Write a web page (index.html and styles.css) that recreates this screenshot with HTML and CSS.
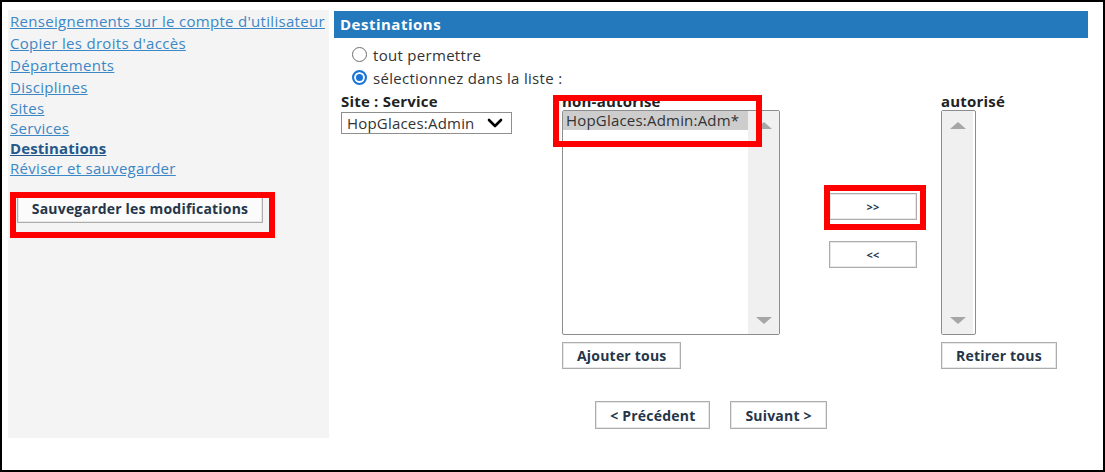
FILE: index.html
```html
<!DOCTYPE html>
<html lang="fr">
<head>
  <meta charset="UTF-8" />
  <meta name="viewport" content="width=device-width, initial-scale=1" />
  <title>Destinations</title>
  <link rel="stylesheet" href="styles.css">
</head>
<body>
  <div class="cadre">

    <div class="menu">
      <a class="lien" href="#">Renseignements sur le compte d'utilisateur</a>
      <a class="lien" href="#">Copier les droits d'accès</a>
      <a class="lien" href="#">Départements</a>
      <a class="lien" href="#">Disciplines</a>
      <a class="lien court" href="#">Sites</a>
      <a class="lien court" href="#">Services</a>
      <a class="lien court actif" href="#">Destinations</a>
      <a class="lien court" href="#">Réviser et sauvegarder</a>
      <button class="bouton sauver">Sauvegarder les modifications</button>
    </div>

    <div class="principal">
      <div class="entete">Destinations</div>

      <div class="choix">
        <label class="option-radio"><span class="radio"></span>tout permettre</label>
        <label class="option-radio"><span class="radio coche"></span>sélectionnez dans la liste :</label>
      </div>

      <div class="colonnes">
        <div class="col col-site">
          <div class="etiquette">Site : Service</div>
          <div class="liste-deroulante">
            <span>HopGlaces:Admin</span>
            <svg width="16" height="10" viewBox="0 0 16 10"><path d="M2 2 L8 8 L14 2" fill="none" stroke="#000" stroke-width="2.6" stroke-linecap="round" stroke-linejoin="round"/></svg>
          </div>
        </div>

        <div class="col col-non">
          <div class="etiquette">non-autorisé</div>
          <div class="boite-liste large">
            <div class="elements">
              <div class="element choisi">HopGlaces:Admin:Adm*</div>
            </div>
            <div class="defilement"><span class="fleche haut"></span><span class="fleche bas"></span></div>
          </div>
          <button class="bouton tous">Ajouter tous</button>
        </div>

        <div class="col col-fleches">
          <button class="bouton petit">&gt;&gt;</button>
          <button class="bouton petit">&lt;&lt;</button>
        </div>

        <div class="col col-oui">
          <div class="etiquette">autorisé</div>
          <div class="boite-liste etroite">
            <div class="defilement"><span class="fleche haut"></span><span class="fleche bas"></span></div>
          </div>
          <button class="bouton tous">Retirer tous</button>
        </div>
      </div>

      <div class="navigation">
        <button class="bouton nav">&lt; Précédent</button>
        <button class="bouton nav">Suivant &gt;</button>
      </div>
    </div>

    <!-- encadres rouges -->
    <div class="marque m-sauver"></div>
    <div class="marque m-liste"></div>
    <div class="marque m-fleche"></div>
  </div>
</body>
</html>
```
FILE: styles.css
```css
body {
  margin: 0;
  font-family: "Open Sans", "Liberation Sans", sans-serif;
  color: #333;
}

.cadre {
  position: relative;
  box-sizing: border-box;
  width: 1105px;
  height: 472px;
  border: 2px solid #000;
  padding: 8px 0 0 6px;
  display: flex;
  gap: 5px;
  background: #fff;
}

.menu {
  width: 321px;
  height: 428px;
  padding-left: 2px;
  box-sizing: border-box;
  background: #f4f4f4;
  display: flex;
  flex-direction: column;
  align-items: flex-start;
}
.lien {
  font-size: 15px;
  letter-spacing: 0.3px;
  line-height: 22px;
  color: #3c87c6;
  text-decoration: underline;
  white-space: nowrap;
}
.lien.court {
  line-height: 20px;
}
.lien.actif {
  font-weight: bold;
  letter-spacing: 0.1px;
  color: #24578a;
}

.bouton {
  font-family: "Open Sans", "Liberation Sans", sans-serif;
  font-weight: bold;
  font-size: 14px;
  letter-spacing: 0.2px;
  color: #25364a;
  background: #fff;
  border: 1px solid #acacac;
  box-shadow: inset 0 0 0 1px #e8e8e8;
  padding: 0;
  cursor: pointer;
}
.sauver {
  width: 246px;
  height: 29px;
  margin: 16px 0 0 7px;
  background: #fbfbfb;
}

.principal {
  width: 754px;
  padding-top: 1px;
}
.entete {
  height: 27px;
  background: #2479bc;
  color: #fff;
  font-weight: bold;
  font-size: 15px;
  letter-spacing: 0.5px;
  line-height: 27px;
  padding-left: 6px;
}

.choix {
  padding: 5px 0 0 18px;
}
.option-radio {
  display: flex;
  align-items: center;
  height: 23px;
  font-size: 15px;
  letter-spacing: 0.3px;
  color: #333;
}
.radio {
  box-sizing: border-box;
  width: 15px;
  height: 15px;
  border: 1px solid #6e6e6e;
  border-radius: 50%;
  background: #fff;
  margin-right: 6px;
}
.radio.coche {
  border: 2px solid #1a75d6;
  background: #1a75d6;
  box-shadow: inset 0 0 0 2px #fff;
}

.colonnes {
  display: flex;
  margin-top: 3px;
  padding-left: 7px;
}
.etiquette {
  font-weight: bold;
  font-size: 15px;
  letter-spacing: 0.2px;
  line-height: 18px;
  color: #222;
}
.col-site { width: 221px; }
.col-non { width: 267px; }
.col-fleches {
  width: 112px;
  padding-top: 101px;
  display: flex;
  flex-direction: column;
  gap: 21px;
}
.col-oui { flex: 1; }

.liste-deroulante {
  box-sizing: border-box;
  width: 171px;
  height: 22px;
  margin-top: 2px;
  border: 1px solid #8e8e8e;
  display: flex;
  align-items: center;
  justify-content: space-between;
  padding: 0 8px 0 5px;
  font-size: 15px;
  letter-spacing: 0.2px;
  color: #333;
}

.boite-liste {
  box-sizing: border-box;
  height: 225px;
  border: 1px solid #8d8d8d;
  border-radius: 2px;
  display: flex;
  background: #fff;
}
.boite-liste.large { width: 218px; }
.boite-liste.etroite { width: 35px; }
.elements { flex: 1; }
.element {
  font-size: 15px;
  letter-spacing: 0.2px;
  line-height: 19px;
  padding-left: 3px;
  color: #333;
  white-space: nowrap;
  overflow: hidden;
}
.element.choisi { background: #cdcdcd; }

.defilement {
  width: 31px;
  background: #f0f0f0;
  display: flex;
  flex-direction: column;
  justify-content: space-between;
  align-items: center;
  padding: 11px 0 10px;
}
.fleche {
  width: 0;
  height: 0;
  border-left: 8px solid transparent;
  border-right: 8px solid transparent;
}
.fleche.haut { border-bottom: 7px solid #a6a6a6; }
.fleche.bas { border-top: 7px solid #a6a6a6; }

.tous {
  height: 27px;
  margin-top: 7px;
  padding: 0 14px;
}
.petit {
  width: 88px;
  height: 27px;
  font-size: 11px;
}

.navigation {
  display: flex;
  justify-content: center;
  gap: 20px;
  margin-top: 32px;
}
.nav {
  height: 28px;
  padding: 0 14px;
}

.marque {
  position: absolute;
  box-sizing: border-box;
  border: 6px solid #ff0000;
}
.m-sauver { left: 8px; top: 190px; width: 265px; height: 46px; }
.m-liste { left: 551px; top: 93px; width: 209px; height: 52px; }
.m-fleche { left: 822px; top: 183px; width: 102px; height: 45px; }
```
